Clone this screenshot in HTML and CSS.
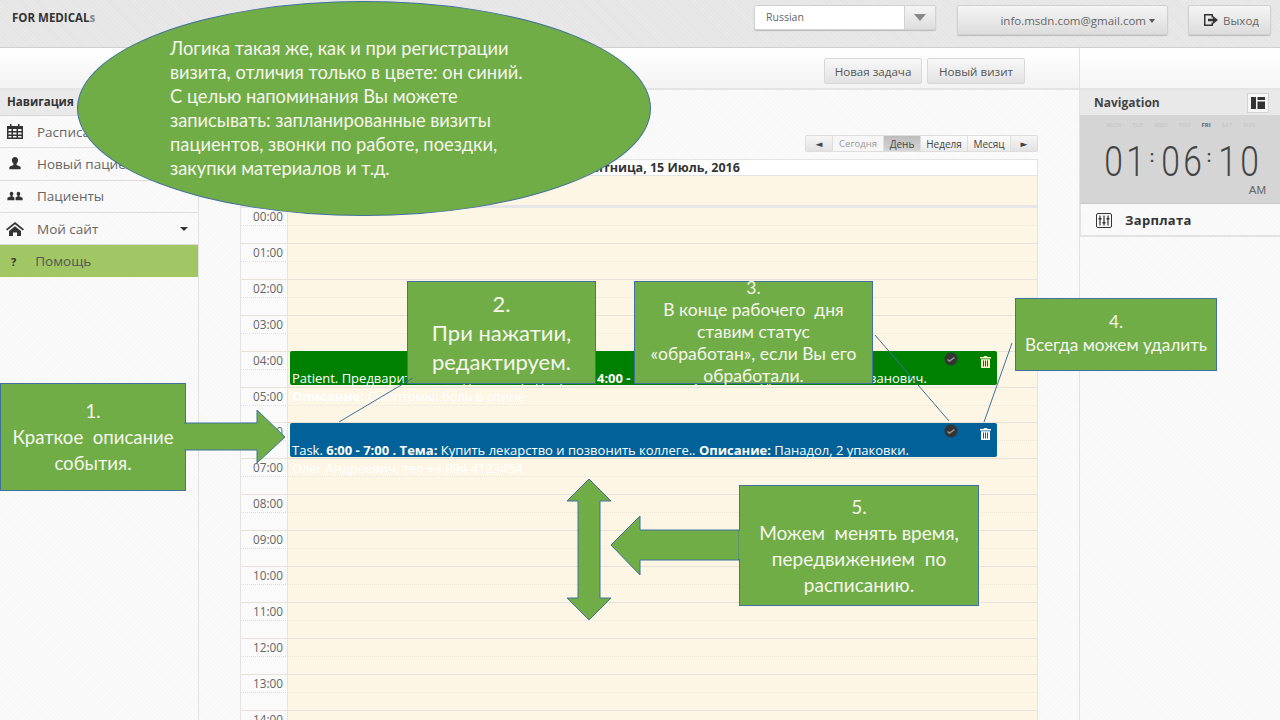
FILE: index.html
```html
<!DOCTYPE html>
<html lang="ru">
  <head>
    <meta charset="UTF-8" />
    <title>For Medicals</title>
    <link rel="stylesheet" href="styles.css">
  </head>
  <body>
    <div id="page">
      <header class="topbar">
        <div class="logo">FOR MEDICAL<span>s</span></div>
        <div class="lang">
          <span class="lang-value">Russian</span>
          <span class="lang-arrow"><i></i></span>
        </div>
        <button class="top-btn email">info.msdn.com@gmail.com <i class="caret"></i></button>
        <button class="top-btn exit">
          <svg width="16" height="14" viewBox="0 0 16 14"><path d="M1 1h9v3.500H8.500V2.500h-6v9h6V9.500H10V13H1z" fill="#333"/><path d="M5 5.700h5V3l5 4-5 4V8.300H5z" fill="#333"/></svg>
          Выход
        </button>
      </header>

      <div class="layout">
        <div class="left-part">
          <div class="toolbar">
            <button class="tool-btn">Новая задача</button>
            <button class="tool-btn">Новый визит</button>
          </div>
          <div class="columns">
            <nav class="sidebar">
              <div class="side-head">Навигация</div>
              <a class="side-item">
                <svg width="18" height="15" viewBox="0 0 18 15"><path d="M4 0h1.500v2H12V0h1.500v2H17v13H1V2h3zM2.500 5v2h3V5zm4.500 0v2h3.500V5zm5 0v2h3.500V5zM2.500 8.500v2h3v-2zm4.500 0v2h3.500v-2zm5 0v2h3.500v-2zM2.500 12v1.500h3V12zm4.500 0v1.500h3.500V12zm5 0v1.500h3.500V12z" fill="#333"/></svg>
                <span>Расписание</span>
              </a>
              <a class="side-item">
                <svg width="18" height="13" viewBox="0 0 18 15"><path d="M9 0c2.300 0 3.500 1.700 3.500 3.800 0 1.700-.8 3.200-1.700 4v1.400c1.800.6 4.200 1.400 4.700 2.400V14h-13v-2.400c.5-1 2.900-1.800 4.700-2.400V7.800c-.9-.8-1.700-2.300-1.700-4C5.500 1.700 6.700 0 9 0z" fill="#333"/></svg>
                <span>Новый пациент</span>
              </a>
              <a class="side-item">
                <svg width="18" height="11" viewBox="0 0 18 13"><path d="M5 1c1.300 0 2 1 2 2.300 0 1-.5 1.900-1 2.300v.8c1 .3 1.900.7 2.300 1.200V11H0V8.200c.4-.7 2.200-1.400 3.800-1.800v-.8c-.5-.4-1-1.300-1-2.300C2.800 2 3.700 1 5 1zm8 0c1.300 0 2.200 1 2.200 2.300 0 1-.5 1.900-1 2.300v.8c1.600.4 3.400 1.100 3.800 1.800V11H9.700V7.600c.4-.5 1.300-.9 2.300-1.200v-.8c-.5-.4-1-1.300-1-2.300C11 2 11.700 1 13 1z" fill="#333"/></svg>
                <span>Пациенты</span>
              </a>
              <a class="side-item">
                <svg width="18" height="14" viewBox="0 0 18 14"><path d="M9 0l9 7.200-1.200 1.300L9 2.300 1.200 8.500 0 7.200z" fill="#333"/><path d="M3 9l6-4.800L15 9v5h-4v-3.500H7V14H3z" fill="#333"/></svg>
                <span>Мой сайт</span>
                <i class="caret side-caret"></i>
              </a>
              <a class="side-item help">
                <b>?</b>
                <span>Помощь</span>
              </a>
            </nav>

            <main class="content">
              <div class="cal-nav">
                <span class="nav-btn arrow">◄</span>
                <span class="nav-btn today">Сегодня</span>
                <span class="nav-btn day">День</span>
                <span class="nav-btn week">Неделя</span>
                <span class="nav-btn month">Месяц</span>
                <span class="nav-btn arrow next">►</span>
              </div>

              <section class="calendar">
                <div class="cal-title">Пятница, 15 Июль, 2016</div>
                <div class="all-day"><div class="time"></div><div class="slot"></div></div>
                <div class="hours">
                  <div class="hour"><div class="time">00:00</div><div class="slot"></div></div>
                  <div class="hour"><div class="time">01:00</div><div class="slot"></div></div>
                  <div class="hour"><div class="time">02:00</div><div class="slot"></div></div>
                  <div class="hour"><div class="time">03:00</div><div class="slot"></div></div>
                  <div class="hour"><div class="time">04:00</div><div class="slot"></div></div>
                  <div class="hour"><div class="time">05:00</div><div class="slot"></div></div>
                  <div class="hour"><div class="time">06:00</div><div class="slot"></div></div>
                  <div class="hour"><div class="time">07:00</div><div class="slot"></div></div>
                  <div class="hour"><div class="time">08:00</div><div class="slot"></div></div>
                  <div class="hour"><div class="time">09:00</div><div class="slot"></div></div>
                  <div class="hour"><div class="time">10:00</div><div class="slot"></div></div>
                  <div class="hour"><div class="time">11:00</div><div class="slot"></div></div>
                  <div class="hour"><div class="time">12:00</div><div class="slot"></div></div>
                  <div class="hour"><div class="time">13:00</div><div class="slot"></div></div>
                  <div class="hour"><div class="time">14:00</div><div class="slot"></div></div>

                  <div class="event event-patient">
                    <span class="ev-ok"><svg width="14" height="14" viewBox="0 0 14 14"><circle cx="7" cy="7" r="6.500" fill="#333"/><path d="M3.500 7.500l2 1.500 5-3.500" stroke="#999" stroke-width="1.500" fill="none"/></svg></span>
                    <span class="ev-del"><svg width="11" height="12" viewBox="0 0 11 12"><path d="M4 0h3l.5 1H11v1.500H0V1h3.500zM1 3.300h9V12H1zm2 1.200v6h1v-6zm2 0v6h1v-6zm2 0v6h1v-6z" fill="#f4f4c8" fill-rule="evenodd"/></svg></span>
                    <p>Patient. Предварительный диагноз: радикулит.&nbsp; <b>4:00 - 5:00 . Пациент:</b> Кондратенко Иван Иванович.</p>
                    <p><b>Описание:</b> Симптомы: боль в спине</p>
                  </div>
                  <div class="event event-task">
                    <span class="ev-ok"><svg width="14" height="14" viewBox="0 0 14 14"><circle cx="7" cy="7" r="6.500" fill="#333"/><path d="M3.500 7.500l2 1.500 5-3.500" stroke="#999" stroke-width="1.500" fill="none"/></svg></span>
                    <span class="ev-del"><svg width="11" height="12" viewBox="0 0 11 12"><path d="M4 0h3l.5 1H11v1.500H0V1h3.500zM1 3.300h9V12H1zm2 1.200v6h1v-6zm2 0v6h1v-6zm2 0v6h1v-6z" fill="#fff" fill-rule="evenodd"/></svg></span>
                    <p>Task. <b>6:00 - 7:00 . Тема:</b> Купить лекарство и позвонить коллеге.. <b>Описание:</b> Панадол, 2 упаковки.</p>
                    <p>Олег Андреевич, тел +4 094 4123454</p>
                  </div>
                </div>
              </section>
            </main>
          </div>
        </div>

        <aside class="right">
          <div class="right-top"></div>
          <div class="right-head">
            <span>Navigation</span>
            <button class="layout-btn"><svg width="14" height="12" viewBox="0 0 14 12"><path d="M0 0h5v12H0zM6.500 0H14v3H6.500zM6.500 4.500H14V12H6.500z" fill="#333"/></svg></button>
          </div>
          <div class="clock">
            <div class="days">
              <span>MON</span><span>TUE</span><span>WED</span><span>THU</span><span class="today-name">FRI</span><span>SAT</span><span>SUN</span>
            </div>
            <div class="digits">
              <span>0</span><span>1</span><em>:</em><span>0</span><span>6</span><em>:</em><span>1</span><span>0</span>
            </div>
            <div class="ampm">AM</div>
          </div>
          <a class="salary">
            <svg width="16" height="15" viewBox="0 0 16 15"><rect x=".5" y=".5" width="15" height="14" rx="1.500" fill="none" stroke="#333"/><path d="M4 2.500v10M8 2.500v10M12 2.500v10" stroke="#333" stroke-width="1.200"/><path d="M2.500 5h3v1.500h-3zM6.500 9h3v1.500h-3zM10.500 5h3v1.500h-3z" fill="#333"/></svg>
            <span>Зарплата</span>
          </a>
        </aside>
      </div>

      <!-- notes on top of the screenshot -->
      <div class="note oval">
        <p>Логика такая же, как и при регистрации<br>визита, отличия только в цвете: он синий.<br>С целью напоминания Вы можете<br>записывать: запланированные визиты<br>пациентов, звонки по работе, поездки,<br>закупки материалов и т.д.</p>
      </div>
      <div class="note note1">1.<br>Краткое&nbsp; описание<br>события.</div>
      <div class="note note2">2.<br>При нажатии,<br>редактируем.</div>
      <div class="note note3">3.<br>В конце рабочего&nbsp; дня<br>ставим статус<br>«обработан», если Вы его<br>обработали.</div>
      <div class="note note4">4.<br>Всегда можем удалить</div>
      <div class="note note5">5.<br>Можем&nbsp; менять время,<br>передвижением&nbsp; по<br>расписанию.</div>
      <svg class="arrows" width="1280" height="720" viewBox="0 0 1280 720">
        <g fill="#70ad47" stroke="#41719c" stroke-width="1">
          <polygon points="185,423 257,423 257,410 285,437 257,463 257,450 185,450"/>
          <polygon points="739,530 640,530 640,516 611,545 640,575 640,560 739,560"/>
          <polygon points="589,479 611,501 600,501 600,598 611,598 589,620 567,598 578,598 578,501 567,501"/>
        </g>
        <g stroke="#70ad47" stroke-width="2.500">
          <line x1="185" y1="424" x2="185" y2="449"/>
          <line x1="740" y1="531" x2="740" y2="559"/>
        </g>
        <g stroke="#41719c" stroke-width="1" fill="none">
          <line x1="413" y1="378" x2="339" y2="422"/>
          <line x1="875" y1="335" x2="949" y2="421"/>
          <line x1="1012" y1="343" x2="984" y2="422"/>
        </g>
      </svg>
    </div>
  </body>
</html>
```

FILE: styles.css
```css
* {
  box-sizing: border-box;
}
html, body {
  margin: 0;
  height: 100%;
  overflow: hidden;
}
body {
  font-family: "Open Sans", "DejaVu Sans", sans-serif;
  color: #555;
  background-color: #fafafa;
}
#page {
  position: relative;
  width: 1280px;
  height: 720px;
  overflow: hidden;
  display: flex;
  flex-direction: column;
  background-color: #fafafa;
  background-image: repeating-linear-gradient(45deg, #f7f7f7 0 1px, transparent 1px 3px);
}
button {
  font-family: inherit;
  cursor: pointer;
}

/* top bar */
.topbar {
  height: 48px;
  flex: none;
  display: flex;
  align-items: flex-start;
  padding: 5px 9px 0 12px;
  background-color: #e8e8e8;
  background-image: repeating-linear-gradient(45deg, #e4e4e4 0 1px, transparent 1px 3px);
  border-bottom: 1px solid #cfcfcf;
}
.logo {
  margin-top: 5px;
  font-size: 11.500px;
  font-weight: 700;
  color: #333;
  margin-right: auto;
}
.logo span {
  color: #888;
}
.lang {
  width: 182px;
  height: 25px;
  display: flex;
  background: #fff;
  border: 1px solid #d2d2d2;
  border-radius: 2px;
  margin-right: 21px;
  box-shadow: 0 1px 1px #bbb;
}
.lang-value {
  flex: 1;
  padding: 4px 11px;
  font-size: 10.500px;
  color: #666;
}
.lang-arrow {
  width: 31px;
  display: flex;
  align-items: center;
  justify-content: center;
  background: linear-gradient(#f4f4f4, #dedede);
  border-left: 1px solid #d2d2d2;
}
.lang-arrow i {
  border-left: 6px solid transparent;
  border-right: 6px solid transparent;
  border-top: 7px solid #888;
}
.top-btn {
  height: 30px;
  font-size: 11.500px;
  color: #666;
  background: linear-gradient(#f5f5f5, #dcdcdc);
  border: 1px solid #d0d0d0;
  border-radius: 2px;
  box-shadow: 0 1px 1px #bbb;
}
.email {
  width: 211px;
  padding: 0 12px 0 0;
  text-align: right;
  margin-right: 20px;
}
.exit {
  width: 83px;
  padding: 0 0 0 3px;
  display: flex;
  align-items: center;
  justify-content: center;
  gap: 4px;
}
.caret {
  display: inline-block;
  vertical-align: middle;
  border-left: 3.500px solid transparent;
  border-right: 3.500px solid transparent;
  border-top: 4px solid #555;
}

/* page columns */
.layout {
  flex: 1;
  display: flex;
  min-height: 0;
}
.left-part {
  width: 1079px;
  display: flex;
  flex-direction: column;
}
.toolbar {
  height: 42px;
  flex: none;
  display: flex;
  justify-content: flex-end;
  align-items: flex-start;
  gap: 5px;
  padding: 10px 54px 0 0;
  background: linear-gradient(#fff, #f3f3f3);
  border-bottom: 2px solid #e4e4e4;
}
.tool-btn {
  height: 26px;
  width: 98px;
  padding: 0;
  font-size: 11.600px;
  color: #555;
  background: linear-gradient(#f8f8f8, #e2e2e2);
  border: 1px solid #d8d8d8;
  border-radius: 2px;
}
.columns {
  flex: 1;
  display: flex;
  min-height: 0;
}

/* left nav */
.sidebar {
  width: 199px;
  flex: none;
  border-right: 1px solid #e2e2e2;
}
.side-head {
  height: 26px;
  padding: 4px 7px;
  font-size: 11.500px;
  font-weight: 700;
  color: #333;
  background-color: #e9e9e9;
  border-bottom: 1px solid #d8d8d8;
}
.side-item {
  height: 32.300px;
  display: flex;
  align-items: center;
  gap: 13px;
  padding: 0 10px 0 6px;
  font-size: 13.500px;
  color: #666;
  border-bottom: 1px solid #dcdcdc;
}
.side-caret {
  margin-left: auto;
  border-left-width: 4.500px;
  border-right-width: 4.500px;
  border-top-width: 4.500px;
  border-top-color: #333;
}
.side-item.help {
  background-color: #a0c764;
  color: #555;
  border-bottom: 0;
  padding-left: 11px;
  gap: 19px;
}
.help b {
  color: #333;
  font-size: 11px;
}

/* calendar */
.content {
  flex: 1;
  padding: 45px 41px 0 41px;
  min-width: 0;
}
.cal-nav {
  display: flex;
  justify-content: flex-end;
  height: 17px;
  margin-bottom: 7px;
}
.nav-btn {
  display: flex;
  align-items: center;
  justify-content: center;
  font-size: 10px;
  color: #444;
  background: linear-gradient(#fdfdfd, #eaeaea);
  border: 1px solid #dedede;
  border-left: 0;
}
.nav-btn.arrow {
  width: 28px;
  font-size: 9px;
  border-left: 1px solid #dedede;
  border-radius: 2px 0 0 2px;
  background: linear-gradient(#f6f6f6, #e2e2e2);
}
.nav-btn.next {
  width: 27px;
  border-left: 0;
  border-radius: 0 2px 2px 0;
}
.today {
  width: 51px;
  font-size: 9.500px;
  color: #999;
  background: #f6f6f6;
}
.day {
  width: 37px;
  background: linear-gradient(#bdbdbd, #d5d5d5);
}
.week {
  width: 47px;
}
.month {
  width: 43px;
}
.calendar {
  width: 798px;
  border-left: 1px solid #e4e4e4;
  border-right: 1px solid #e4e4e4;
}
.cal-title {
  height: 17px;
  padding-left: 48px;
  text-align: center;
  font-size: 12.500px;
  line-height: 15px;
  font-weight: 700;
  color: #333;
  border-top: 1px solid #e4e4e4;
  border-bottom: 1px solid #e4e4e4;
  background: #fff;
}
.all-day {
  display: flex;
  height: 32px;
  border-bottom: 3px solid #e6e6e6;
}
.time {
  width: 47px;
  flex: none;
  padding: 0 4px 0 0;
  text-align: right;
  font-size: 11.800px;
  color: #666;
  border-right: 1px solid #e4e4e4;
}
.slot {
  flex: 1;
  background-color: #fdf6e4;
}
.hours {
  position: relative;
}
.hour {
  height: 35.920px;
  display: flex;
  border-bottom: 1px solid #e6e2d8;
}
.hour .slot {
  background-image: repeating-linear-gradient(90deg, #ece7d8 0 1px, transparent 1px 2px);
  background-size: 100% 1px;
  background-position: 0 17px;
  background-repeat: no-repeat;
}
.hour .time {
  background-color: #fafafa;
  background-image: repeating-linear-gradient(90deg, #ddd 0 1px, transparent 1px 2px);
  background-size: 100% 1px;
  background-position: 0 17px;
  background-repeat: no-repeat;
}
.event {
  position: absolute;
  left: 49px;
  width: 707px;
  height: 34px;
  padding: 18px 0 0 2px;
  border-radius: 2px;
  color: #fff;
  font-size: 13px;
  line-height: 18px;
}
.event p {
  margin: 0;
  white-space: nowrap;
}
.event-patient {
  top: 143px;
  background-color: #008000;
}
.event-task {
  top: 215px;
  background-color: #006299;
}
.ev-ok {
  position: absolute;
  top: 1px;
  right: 39px;
}
.ev-del {
  position: absolute;
  top: 3px;
  right: 6px;
}

/* right panel */
.right {
  flex: 1;
  border-left: 1px solid #e2e2e2;
}
.right-top {
  height: 42px;
  background: linear-gradient(#fff, #f6f6f6);
  border-bottom: 2px solid #e4e4e4;
}
.right-head {
  height: 25px;
  display: flex;
  align-items: flex-start;
  justify-content: space-between;
  padding: 4px 11px 0 14px;
  font-size: 12px;
  font-weight: 700;
  color: #444;
  background-color: #e9e9e9;
}
.layout-btn {
  width: 22px;
  height: 20px;
  margin-top: -1px;
  padding: 0;
  display: flex;
  align-items: center;
  justify-content: center;
  background: #f6f6f6;
  border: 1px solid #d4d4d4;
}
.clock {
  height: 89px;
  padding-top: 6px;
  background-color: #d5d5d5;
  border-bottom: 1px solid #c8c8c8;
}
.days {
  display: flex;
  justify-content: center;
  gap: 11px;
  padding-left: 2px;
  font-size: 6px;
  color: #c2c2c2;
}
.today-name {
  color: #666;
  font-weight: 700;
}
.digits {
  display: grid;
  grid-template-columns: 21.500px 21.500px 14px 21.500px 21.500px 14px 21.500px 21.500px;
  margin: 16px 0 0 22px;
  height: 34px;
  line-height: 34px;
  font-family: "Roboto", sans-serif;
  font-weight: 300;
  font-size: 42px;
  color: #444;
}
.digits span {
  text-align: center;
  transform: scaleX(.8);
}
.digits em {
  font-style: normal;
  font-size: 16px;
  text-align: center;
  line-height: 24px;
  font-weight: 700;
}
.ampm {
  margin-top: 5px;
  padding-right: 14px;
  text-align: right;
  font-family: "Liberation Sans", sans-serif;
  font-size: 11.500px;
  color: #666;
}
.salary {
  height: 33px;
  display: flex;
  align-items: center;
  gap: 13px;
  padding: 1px 0 0 15px;
  font-size: 13px;
  letter-spacing: .3px;
  font-weight: 700;
  color: #333;
  border-bottom: 2px solid #e2e2e2;
  border-left: 1px solid #e2e2e2;
}

/* notes */
.arrows {
  position: absolute;
  left: 0;
  top: 0;
}
.note {
  position: absolute;
  display: flex;
  align-items: center;
  justify-content: center;
  text-align: center;
  color: #f6f6ee;
  font-family: "Lato", "Open Sans", sans-serif;
  background-color: #70ad47;
  border: 1px solid #41719c;
}
.oval {
  left: 77px;
  top: 1px;
  width: 574px;
  height: 215px;
  border-radius: 50%;
  justify-content: flex-start;
  text-align: left;
  padding-left: 92px;
  font-size: 18.300px;
  line-height: 24px;
}
.oval p {
  margin: 0 0 1px;
}
.note1 {
  left: 0;
  top: 383px;
  width: 186px;
  height: 108px;
  font-size: 18.600px;
  line-height: 26px;
  padding-bottom: 1px;
}
.note2 {
  left: 407px;
  top: 281px;
  width: 189px;
  height: 103px;
  font-size: 22px;
  line-height: 29px;
}
.note3 {
  left: 634px;
  top: 281px;
  width: 239px;
  height: 103px;
  font-size: 17.500px;
  line-height: 22px;
  padding-bottom: 1px;
}
.note4 {
  left: 1015px;
  top: 298px;
  width: 202px;
  height: 73px;
  font-size: 17.200px;
  line-height: 23px;
  padding-bottom: 3px;
}
.note5 {
  left: 739px;
  top: 485px;
  width: 240px;
  height: 121px;
  font-size: 19px;
  line-height: 26px;
}
```
